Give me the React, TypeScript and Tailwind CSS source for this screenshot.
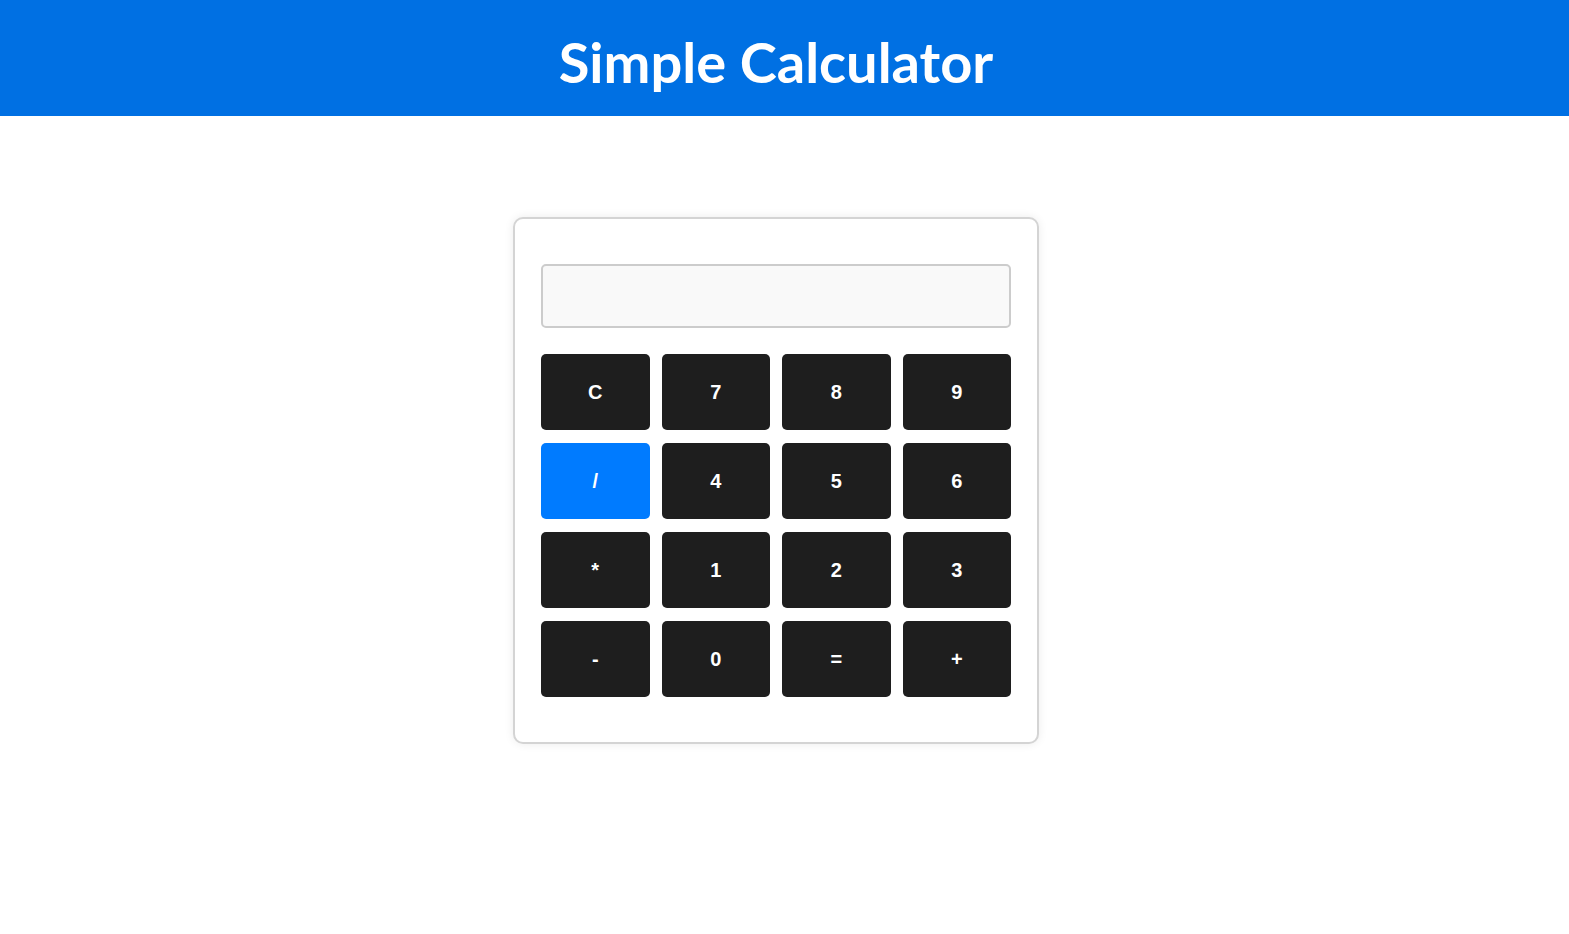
import React from "react";

const keys = ["C", "7", "8", "9", "/", "4", "5", "6", "*", "1", "2", "3", "-", "0", "=", "+"];

export default function App() {
  return (
    <div className="min-h-screen bg-white">
      <header className="h-[116px] bg-[#0070e3] flex items-center justify-center pr-[17px] pt-[8px]">
        <h1 className="text-white font-bold text-[56px] font-['Lato','Noto_Sans',sans-serif] leading-none">
          Simple Calculator
        </h1>
      </header>
      <main className="flex justify-center pt-[101px] pr-[17px]">
        <div className="w-[526px] border-2 border-[#d4d4d4] rounded-[10px] bg-white shadow-[0_0_10px_rgba(0,0,0,0.08)] px-[26px] pt-[45px] pb-[45px]">
          <div className="h-[64px] border-2 border-[#cccccc] bg-[#f9f9f9] rounded-[5px]" />
          <div className="mt-[26px] grid grid-cols-4 gap-x-[12px] gap-y-[13px]">
            {keys.map((k) => (
              <button
                key={k}
                className={`h-[76px] rounded-[5px] text-white font-bold text-[20px] font-['Liberation_Sans',Arial,sans-serif] flex items-center justify-center ${
                  k === "/" ? "bg-[#007bff]" : "bg-[#1e1e1e]"
                }`}
              >
                {k}
              </button>
            ))}
          </div>
        </div>
      </main>
    </div>
  );
}
